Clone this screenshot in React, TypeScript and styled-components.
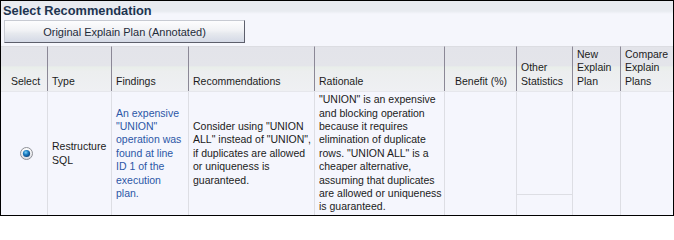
import React from "react";
import styled, { createGlobalStyle } from "styled-components";

const GlobalStyle = createGlobalStyle`
  html, body {
    margin: 0;
    padding: 0;
    background: #ffffff;
  }
  * {
    box-sizing: border-box;
  }
`;

const columns = [
  { key: "select", title: ["Select"], width: 46, align: "center" },
  { key: "type", title: ["Type"], width: 64, align: "left" },
  { key: "findings", title: ["Findings"], width: 77, align: "left" },
  { key: "recs", title: ["Recommendations"], width: 126, align: "left" },
  { key: "rationale", title: ["Rationale"], width: 130, align: "left" },
  { key: "benefit", title: ["Benefit (%)"], width: 72, align: "center" },
  { key: "other", title: ["Other", "Statistics"], width: 56, align: "left" },
  { key: "newplan", title: ["New", "Explain", "Plan"], width: 48, align: "left" },
  { key: "compare", title: ["Compare", "Explain", "Plans"], width: 53, align: "left" },
];

const gridCols = columns.map((c) => `${c.width}px`).join(" ");

const findings = [
  "An expensive",
  "\"UNION\"",
  "operation was",
  "found at line",
  "ID 1 of the",
  "execution",
  "plan.",
];

const recommendation = [
  "Consider using \"UNION",
  "ALL\" instead of \"UNION\",",
  "if duplicates are allowed",
  "or uniqueness is",
  "guaranteed.",
];

const rationale = [
  "\"UNION\" is an expensive",
  "and blocking operation",
  "because it requires",
  "elimination of duplicate",
  "rows. \"UNION ALL\" is a",
  "cheaper alternative,",
  "assuming that duplicates",
  "are allowed or uniqueness",
  "is guaranteed.",
];

const Lines = ({ lines }: { lines: string[] }) => (
  <>
    {lines.map((l, i) => (
      <Line key={i}>{l}</Line>
    ))}
  </>
);

const RadioIcon = () => (
  <svg width="13" height="13" viewBox="0 0 13 13">
    <defs>
      <linearGradient id="ring" x1="0" y1="0" x2="0" y2="1">
        <stop offset="0" stopColor="#ffffff" />
        <stop offset="1" stopColor="#dcdde2" />
      </linearGradient>
      <radialGradient id="dot" cx="0.4" cy="0.35" r="0.7">
        <stop offset="0" stopColor="#7fd0f5" />
        <stop offset="0.45" stopColor="#1c7fc4" />
        <stop offset="1" stopColor="#0b3f78" />
      </radialGradient>
    </defs>
    <circle cx="6.5" cy="6.5" r="6" fill="url(#ring)" stroke="#8d8f96" strokeWidth="1" />
    <circle cx="6.5" cy="6.5" r="3.6" fill="url(#dot)" />
  </svg>
);

export default function App() {
  return (
    <>
      <GlobalStyle />
      <Frame>
        <TitleBar>Select Recommendation</TitleBar>
        <Toolbar>
          <PlanButton>Original Explain Plan (Annotated)</PlanButton>
        </Toolbar>
        <Table>
          {columns.map((c, i) => (
            <HeadCell key={c.key} $first={i === 0} $align={c.align}>
              <Lines lines={c.title} />
            </HeadCell>
          ))}
          <BodyCell $first $align="center">
            <RadioIcon />
          </BodyCell>
          <BodyCell>
            <Lines lines={["Restructure", "SQL"]} />
          </BodyCell>
          <BodyCell $link>
            <Lines lines={findings} />
          </BodyCell>
          <BodyCell>
            <Lines lines={recommendation} />
          </BodyCell>
          <BodyCell>
            <Lines lines={rationale} />
          </BodyCell>
          <BodyCell />
          <StatsCell>
            <StatsTop />
            <StatsBottom />
          </StatsCell>
          <BodyCell />
          <BodyCell />
        </Table>
      </Frame>
    </>
  );
}

const Frame = styled.div`
  width: 674px;
  height: 216px;
  border: 1px solid #000000;
  background: #f5f6fc;
  display: flex;
  flex-direction: column;
  font-family: "Liberation Sans", Arial, sans-serif;
  font-size: 10.5px;
  color: #1b1b1b;
  overflow: hidden;
`;

const TitleBar = styled.div`
  height: 19px;
  padding: 2px 0 0 2px;
  font-size: 12.8px;
  font-weight: 700;
  color: #1d3450;
  line-height: 15px;
  background: linear-gradient(#e8ebf0 0px, #e8ebf0 10px, #f5f6fc 13px);
`;

const Toolbar = styled.div`
  height: 26px;
  padding: 0 0 3px 3px;
`;

const PlanButton = styled.div`
  width: 241px;
  height: 23px;
  display: flex;
  align-items: center;
  justify-content: center;
  border: 1px solid #c7cad2;
  border-right-color: #5d5f6c;
  border-bottom-color: #5d5f6c;
  background: linear-gradient(#fdfdfe 0%, #f1f2f5 45%, #e6e9ee 60%, #d4d9e6 100%);
  color: #1f2b3a;
  font-size: 11px;
`;

const Table = styled.div`
  flex: 1;
  display: grid;
  grid-template-columns: ${gridCols};
  grid-template-rows: 45px 1fr;
`;

const HeadCell = styled.div<{ $first?: boolean; $align?: string }>`
  display: flex;
  flex-direction: column;
  justify-content: flex-end;
  align-items: ${(p) => (p.$align === "center" ? "center" : "flex-start")};
  padding: 0 3px 3px ${(p) => (p.$first ? "6px" : "4px")};
  border-left: ${(p) => (p.$first ? "none" : "1px solid #8b8896")};
  border-top: 1px solid #dcdde2;
  background: linear-gradient(#e3e4ea 0%, #e4e5ea 42%, #e9eeea 46%, #eceeef 56%, #eff0f3 100%);
  color: #1c1c1c;
  white-space: nowrap;
`;

const BodyCell = styled.div<{ $first?: boolean; $align?: string; $link?: boolean }>`
  display: flex;
  flex-direction: column;
  justify-content: center;
  align-items: ${(p) => (p.$align === "center" ? "center" : "flex-start")};
  padding: 0 2px 0 ${(p) => (p.$first ? "7px" : "4px")};
  border-left: ${(p) => (p.$first ? "none" : "1px solid #dddee4")};
  border-top: 1px solid #e6e7ec;
  color: ${(p) => (p.$link ? "#2c56a6" : "#1b1b1b")};
  white-space: nowrap;
  background: #f5f6fd;
`;

const StatsCell = styled.div`
  display: flex;
  flex-direction: column;
  border-left: 1px solid #dddee4;
  border-top: 1px solid #e6e7ec;
  background: #f5f6fd;
`;

const StatsTop = styled.div`
  flex: 1;
  border-bottom: 1px solid #dddee4;
`;

const StatsBottom = styled.div`
  height: 20px;
`;

const Line = styled.div`
  line-height: 13.4px;
`;
